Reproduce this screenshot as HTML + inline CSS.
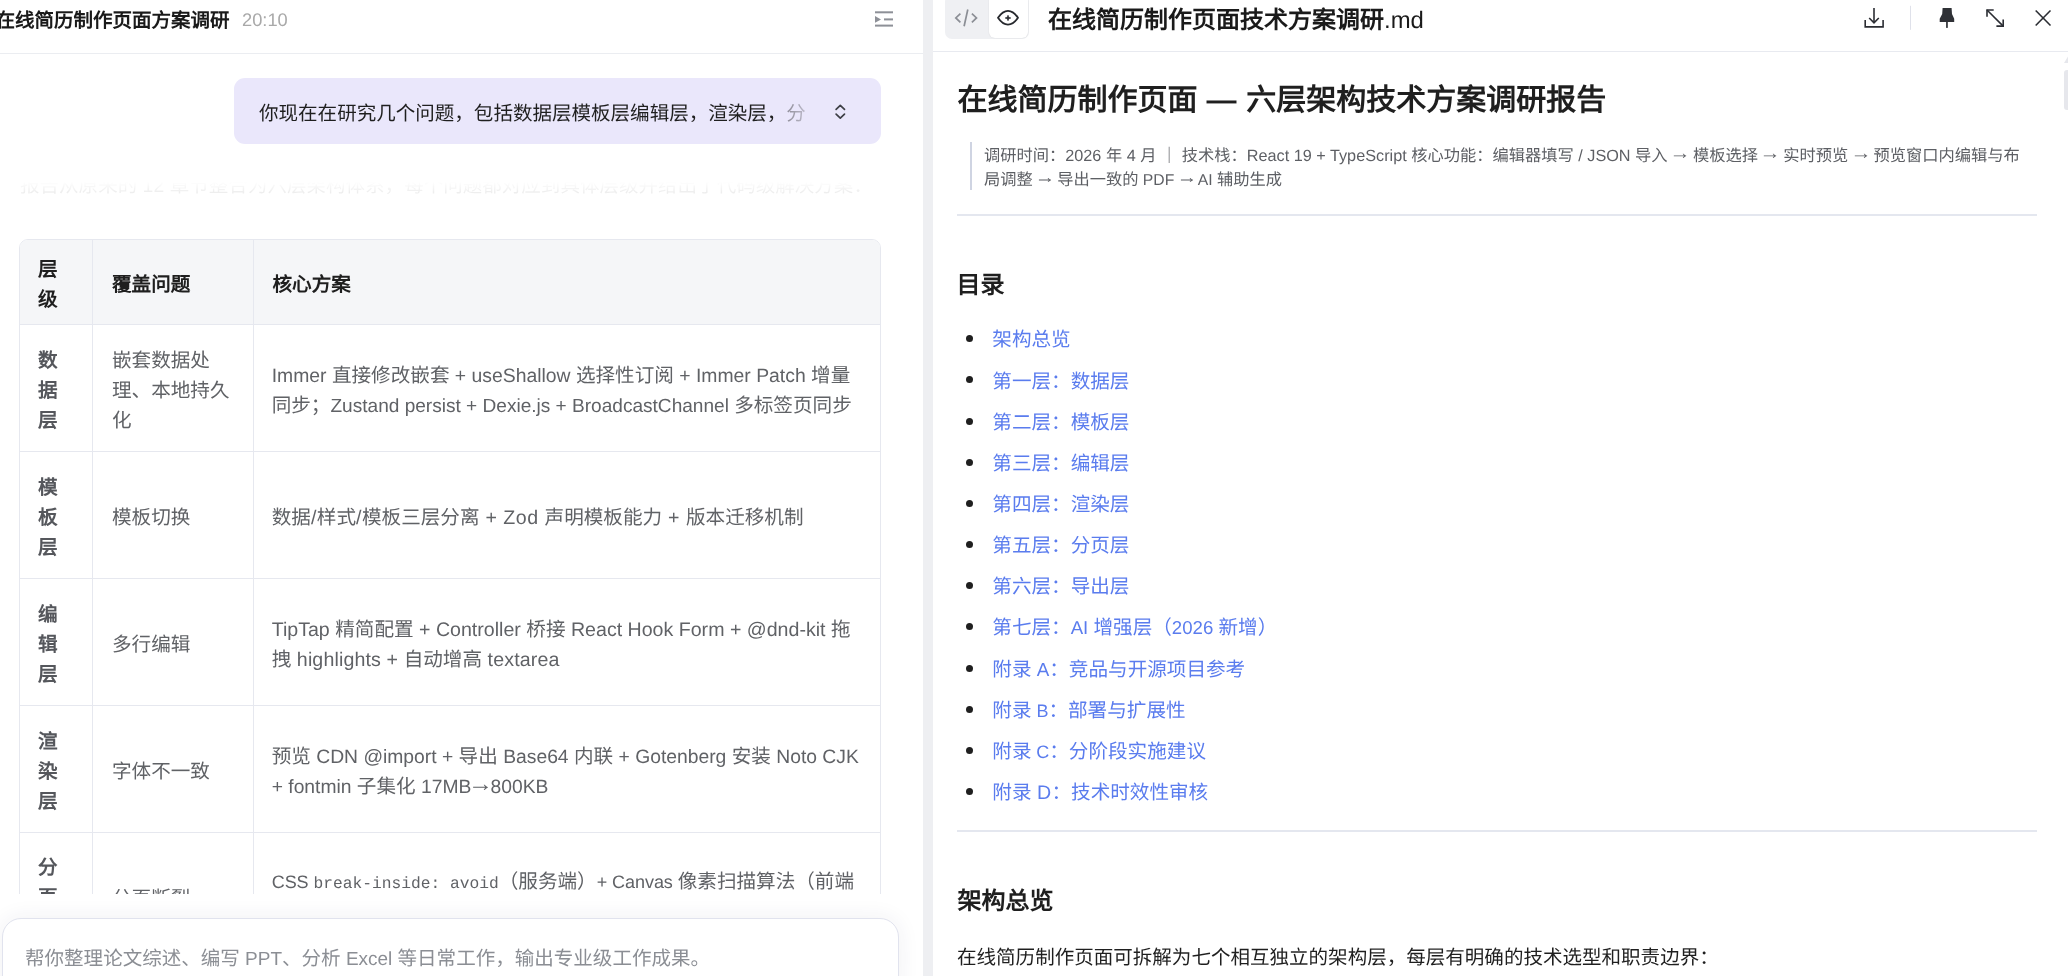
<!DOCTYPE html>
<html lang="zh-CN">
<head>
<meta charset="utf-8">
<title>在线简历制作页面技术方案调研</title>
<style>
*{box-sizing:border-box;margin:0;padding:0}
html,body{width:2068px;height:976px;overflow:hidden;background:#fff}
body{font-family:"Liberation Sans",sans-serif;font-size:19.55px;color:#1f1f1f;position:relative;text-rendering:geometricPrecision}
#page{position:absolute;left:0;top:0;width:2068px;height:976px;opacity:.999}
.abs{position:absolute}
.t{position:absolute;white-space:nowrap;line-height:30px;height:30px}
.nb{font-weight:normal}
#left{position:absolute;left:0;top:0;width:923px;height:976px;background:#fff;overflow:hidden}
#lhead{position:absolute;left:0;top:0;width:923px;height:54px;border-bottom:1px solid #ebedf1;background:#fff}
#bubble{position:absolute;left:234px;top:78px;width:647px;height:66px;border-radius:11px;background:#eae7fb}
#bfade{position:absolute;left:548px;top:14px;width:26px;height:40px;background:linear-gradient(90deg,rgba(234,231,251,.5),rgba(234,231,251,.8))}
#ghost{left:20px;top:171px;color:#000;opacity:.075;height:23px;overflow:hidden;-webkit-mask-image:linear-gradient(transparent 45%,#000 100%);mask-image:linear-gradient(transparent 45%,#000 100%)}
#tblwrap{position:absolute;left:19px;top:239px;width:862px;height:655px;overflow:hidden}
#tbl{position:absolute;left:0;top:0;width:862px;height:760px;border:1px solid #e6e8ef;border-radius:9px;overflow:hidden;background:#fff}
#thead{position:absolute;left:0;top:0;width:862px;height:85px;background:#f5f6f8;border-bottom:1px solid #e6e8ef}
.vline{position:absolute;top:0;width:1px;height:760px;background:#e6e8ef}
.hline{position:absolute;left:0;width:862px;height:1px;background:#e6e8ef}
.th,.c1,.c2,.c3{font-size:19.6px}
.th{font-weight:bold;color:#1f1f1f}
.c1{font-weight:bold;color:#55575c}
.c2,.c3{color:#606266}
.mono{font-family:"Liberation Mono",monospace;font-size:16.25px}
#lfade{position:absolute;left:0;top:894px;width:923px;height:82px;background:#fff}
#input{position:absolute;left:2px;top:918px;width:897px;height:80px;border:1px solid #e1e3ee;border-radius:19px;background:#fff;box-shadow:0 0 22px rgba(40,44,80,.07)}
#divider{position:absolute;left:923px;top:0;width:10px;height:976px;background:#eeeff2}
#right{position:absolute;left:933px;top:0;width:1135px;height:976px;background:#fff;overflow:hidden}
#rhead{position:absolute;left:0;top:0;width:1135px;height:52px;border-bottom:1px solid #e8eaf0;background:#fff}
#tabs{position:absolute;left:12px;top:-5px;width:84px;height:44px;border-radius:7px;background:#eff0f3}
#tabsel{position:absolute;left:44px;top:0;width:39.2px;height:43.3px;border-radius:6px;background:#fff;box-shadow:0 0 1.5px rgba(0,0,0,.12)}
#ricons{position:absolute;left:0;top:0}
#bq{position:absolute;left:37px;top:142px;width:2px;height:48px;background:#cfd4e2}
.bqt{font-size:16.25px;color:#5d5f64;line-height:24px;height:24px}
.hr{position:absolute;left:24px;width:1080px;height:2px;background:#e4e7ef}
.h2{font-size:24px;font-weight:bold;color:#1f1f1f}
.li{color:#5a7cee;font-size:19.6px}
.dot{position:absolute;left:33px;width:7px;height:7px;border-radius:50%;background:#1f1f1f}
#scroll{position:absolute;left:1131px;top:70px;width:6px;height:40px;border-radius:3px;background:#e6e7ec}
.ar{display:inline-block;transform:translateY(-.15em) scale(1.3,1.15)}
</style>
</head>
<body>
<div id="page">
<div id="left">
<div id="lhead">
<div class="t" style="left:-4.6px;top:6px;font-size:19.5px;font-weight:bold;color:#1a1a1a">在线简历制作页面方案调研</div>
<div class="t" style="left:242px;top:5px;font-size:18.5px;color:#a9a9a9"><span class="l" style="font-size:98.9%;letter-spacing:0.01px">20:10</span></div>
<svg class="abs" style="left:874px;top:10px" width="20" height="18" viewBox="0 0 20 18"><g fill="#8d9097"><rect x="1" y="1.3" width="18" height="2"/><rect x="10" y="8.4" width="9" height="2"/><rect x="1" y="14.6" width="18" height="2"/><path d="M1 6 L7 9.4 L1 12.8 Z"/></g></svg>
</div>
<div id="bubble">
<div class="t" style="left:25px;top:20.8px;color:#1f1f1f">你现在在研究几个问题，包括数据层模板层编辑层，渲染层，分</div>
<div id="bfade"></div>
<svg class="abs" style="left:599px;top:25px" width="16" height="18" viewBox="0 0 16 18"><g fill="none" stroke="#3d3f45" stroke-width="1.7" stroke-linecap="round" stroke-linejoin="round"><path d="M3.1 6.3 L7.3 2.3 L11.5 6.3"/><path d="M3.1 11.2 L7.3 15.2 L11.5 11.2"/></g></svg>
</div>
<div class="t" id="ghost">报告从原来的 12 章节整合为六层架构体系，每个问题都对应到具体层级并给出了代码级解决方案：</div>
<div id="tblwrap"><div id="tbl">
<div id="thead"></div>
<div class="vline" style="left:72px"></div>
<div class="vline" style="left:233px"></div>
<div class="hline" style="top:211px"></div>
<div class="hline" style="top:338px"></div>
<div class="hline" style="top:465px"></div>
<div class="hline" style="top:592px"></div>
<div class="t th" style="left:18px;top:14.7px">层</div>
<div class="t th" style="left:18px;top:44.7px">级</div>
<div class="t th" style="left:92px;top:30.2px">覆盖问题</div>
<div class="t th" style="left:252.5px;top:30.2px">核心方案</div>
<div class="t c1" style="left:18px;top:105.7px">数</div>
<div class="t c1" style="left:18px;top:135.7px">据</div>
<div class="t c1" style="left:18px;top:165.7px">层</div>
<div class="t c2" style="left:92px;top:105.7px">嵌套数据处</div>
<div class="t c2" style="left:92px;top:135.7px">理、本地持久</div>
<div class="t c2" style="left:92px;top:165.7px">化</div>
<div class="t c3" style="left:251.7px;top:121.2px"><span class="l" style="font-size:98.8%;letter-spacing:-0.00px">Immer </span>直接修改嵌套<span class="l" style="font-size:98.8%;letter-spacing:-0.00px"> + useShallow </span>选择性订阅<span class="l" style="font-size:98.8%;letter-spacing:-0.00px"> + Immer Patch </span>增量</div>
<div class="t c3" style="left:251.7px;top:151.2px">同步；<span class="l" style="font-size:97.3%;letter-spacing:0.00px">Zustand persist + Dexie.js + BroadcastChannel </span>多标签页同步</div>
<div class="t c1" style="left:18px;top:232.7px">模</div>
<div class="t c1" style="left:18px;top:262.7px">板</div>
<div class="t c1" style="left:18px;top:292.7px">层</div>
<div class="t c2" style="left:92px;top:262.7px">模板切换</div>
<div class="t c3" style="left:251.7px;top:262.7px">数据<span class="l" style="letter-spacing:0.50px">/</span>样式<span class="l" style="letter-spacing:0.50px">/</span>模板三层分离<span class="l" style="letter-spacing:0.50px"> + Zod </span>声明模板能力<span class="l" style="letter-spacing:0.50px"> + </span>版本迁移机制</div>
<div class="t c1" style="left:18px;top:359.7px">编</div>
<div class="t c1" style="left:18px;top:389.7px">辑</div>
<div class="t c1" style="left:18px;top:419.7px">层</div>
<div class="t c2" style="left:92px;top:389.7px">多行编辑</div>
<div class="t c3" style="left:251.7px;top:374.7px"><span class="l" style="letter-spacing:-0.00px">TipTap </span>精简配置<span class="l" style="letter-spacing:-0.00px"> + Controller </span>桥接<span class="l" style="letter-spacing:-0.00px"> React Hook Form + @dnd-kit </span>拖</div>
<div class="t c3" style="left:251.7px;top:404.7px">拽<span class="l" style="letter-spacing:0.13px"> highlights + </span>自动增高<span class="l" style="letter-spacing:0.13px"> textarea</span></div>
<div class="t c1" style="left:18px;top:486.7px">渲</div>
<div class="t c1" style="left:18px;top:516.7px">染</div>
<div class="t c1" style="left:18px;top:546.7px">层</div>
<div class="t c2" style="left:92px;top:516.7px">字体不一致</div>
<div class="t c3" style="left:251.7px;top:501.7px">预览<span class="l" style="font-size:98.5%;letter-spacing:0.00px"> CDN @import + </span>导出<span class="l" style="font-size:98.5%;letter-spacing:0.00px"> Base64 </span>内联<span class="l" style="font-size:98.5%;letter-spacing:0.00px"> + Gotenberg </span>安装<span class="l" style="font-size:98.5%;letter-spacing:0.00px"> Noto CJK</span></div>
<div class="t c3" style="left:251.7px;top:531.7px"><span class="l" style="font-size:98.4%;letter-spacing:0.00px">+ fontmin </span>子集化<span class="l" style="font-size:98.4%;letter-spacing:0.00px"> 17MB<span class="ar">→</span>800KB</span></div>
<div class="t c1" style="left:18px;top:613.3px">分</div>
<div class="t c1" style="left:18px;top:643.3px">页</div>
<div class="t c1" style="left:18px;top:673.3px">层</div>
<div class="t c2" style="left:92px;top:644.2px">分页断裂</div>
<div class="t c3" style="left:251.7px;top:626.9px"><span class="l" style="font-size:92.0%;letter-spacing:-0.07px">CSS </span><span class="mono">break-inside: avoid</span>（服务端）<span class="l" style="font-size:92.0%;letter-spacing:-0.07px">+ Canvas </span>像素扫描算法（前端</div>
<div class="t c3" style="left:251.7px;top:659.2px">兜底）<span>+ </span>孤行寡行控制</div>
</div></div>
<div id="lfade"></div>
<div id="input">
<div class="t" style="left:22px;top:24.8px;color:#8b8e94">帮你整理论文综述、编写<span class="l" style="font-size:97.1%;letter-spacing:-0.00px"> PPT</span>、分析<span class="l" style="font-size:97.1%;letter-spacing:-0.00px"> Excel </span>等日常工作，输出专业级工作成果。</div>
</div>
</div>

<div id="divider"></div>
<div id="right">
<div id="rhead">
<div id="tabs"><div id="tabsel"></div></div>
<div class="t" style="left:115.0px;top:6px;font-size:24px;font-weight:bold;color:#1a1a1a">在线简历制作页面技术方案调研<span class="nb l" style="font-size:99.5%;letter-spacing:-0.00px">.md</span></div>
<svg id="ricons" width="1135" height="52" viewBox="933 0 1135 52">
<g fill="none" stroke="#8b8e95" stroke-width="1.7"><path d="M960.4 13.6 L955.8 17.95 L960.4 22.3"/><path d="M967.8 9.5 L964.1 26.3"/><path d="M971.9 13.6 L976.5 17.95 L971.9 22.3"/></g>
<path d="M998 17.8 C1001.5 12.6 1005 10.9 1008 10.9 C1011 10.9 1014.5 12.6 1018 17.8 C1014.5 23 1011 24.7 1008 24.7 C1005 24.7 1001.5 23 998 17.8 Z" fill="none" stroke="#26282d" stroke-width="1.8" stroke-linejoin="round"/>
<path d="M1008 15.2 L1008.8 17.2 L1010.9 18 L1008.8 18.8 L1008 20.8 L1007.2 18.8 L1005.1 18 L1007.2 17.2 Z" fill="#26282d" stroke="#26282d" stroke-width=".6" stroke-linejoin="round"/>
<g fill="none" stroke="#2b2d33" stroke-width="1.6"><path d="M1865.2 20.1 V26.9 H1883.1 V20.1"/><path d="M1874 8 V22.6"/><path d="M1869.2 18 L1874 22.8 L1878.8 18"/></g>
<rect x="1910" y="5.8" width="1" height="24" fill="#dfe1ea"/>
<path d="M1942.6 8 H1951.6 L1952 14 L1954.2 18.8 V22 H1939.7 V18.8 L1942.2 14 Z" fill="#2f3136"/><rect x="1946.1" y="21.5" width="1.7" height="6.4" fill="#2f3136"/>
<g fill="none" stroke="#2b2d33" stroke-width="1.6"><path d="M1987 10 L2003.2 26.1"/><path d="M1993.7 10 H1987 V16.8"/><path d="M1996.4 26.1 H2003.2 V19.4"/></g>
<g fill="none" stroke="#2b2d33" stroke-width="1.6"><path d="M2035.7 10.5 L2050.5 25.5"/><path d="M2050.5 10.5 L2035.7 25.5"/></g>
</svg>
</div>
<div id="bq"></div>
<div class="hr" style="top:214px"></div>
<div class="hr" style="top:830px"></div>
<div class="dot" style="top:335.2px"></div>
<div class="dot" style="top:376.4px"></div>
<div class="dot" style="top:417.5px"></div>
<div class="dot" style="top:458.7px"></div>
<div class="dot" style="top:499.8px"></div>
<div class="dot" style="top:541.0px"></div>
<div class="dot" style="top:582.2px"></div>
<div class="dot" style="top:623.3px"></div>
<div class="dot" style="top:664.5px"></div>
<div class="dot" style="top:705.6px"></div>
<div class="dot" style="top:746.8px"></div>
<div class="dot" style="top:788.0px"></div>
<div class="t" style="left:24.5px;top:86px;font-size:30px;font-weight:bold;color:#1f1f1f">在线简历制作页面<span class="l" style="letter-spacing:0.70px"> — </span>六层架构技术方案调研报告</div>
<div class="t bqt" style="left:51px;top:144px">调研时间：<span class="l" style="font-size:99.9%;letter-spacing:0.01px">2026 </span>年<span class="l" style="font-size:99.9%;letter-spacing:0.01px"> 4 </span>月<span class="l" style="font-size:99.9%;letter-spacing:0.01px"> </span>｜<span class="l" style="font-size:99.9%;letter-spacing:0.01px"> </span>技术栈：<span class="l" style="font-size:99.9%;letter-spacing:0.01px">React 19 + TypeScript </span>核心功能：编辑器填写<span class="l" style="font-size:99.9%;letter-spacing:0.01px"> / JSON </span>导入<span class="l" style="font-size:99.9%;letter-spacing:0.01px"> <span class="ar">→</span> </span>模板选择<span class="l" style="font-size:99.9%;letter-spacing:0.01px"> <span class="ar">→</span> </span>实时预览<span class="l" style="font-size:99.9%;letter-spacing:0.01px"> <span class="ar">→</span> </span>预览窗口内编辑与布</div>
<div class="t bqt" style="left:51px;top:168px">局调整<span class="l" style="font-size:96.8%;letter-spacing:0.00px"> <span class="ar">→</span> </span>导出一致的<span class="l" style="font-size:96.8%;letter-spacing:0.00px"> PDF <span class="ar">→</span> AI </span>辅助生成</div>
<div class="t h2" style="left:23.5px;top:271.0px">目录</div>
<div class="t li" style="left:59.3px;top:325.3px">架构总览</div>
<div class="t li" style="left:59.3px;top:366.5px">第一层：数据层</div>
<div class="t li" style="left:59.3px;top:407.6px">第二层：模板层</div>
<div class="t li" style="left:59.3px;top:448.8px">第三层：编辑层</div>
<div class="t li" style="left:59.3px;top:489.9px">第四层：渲染层</div>
<div class="t li" style="left:59.3px;top:531.1px">第五层：分页层</div>
<div class="t li" style="left:59.3px;top:572.3px">第六层：导出层</div>
<div class="t li" style="left:59.3px;top:613.4px">第七层：<span class="l" style="font-size:95.1%;letter-spacing:0.01px">AI </span>增强层（<span class="l" style="font-size:95.1%;letter-spacing:0.01px">2026 </span>新增）</div>
<div class="t li" style="left:59.3px;top:654.6px">附录<span class="l" style="font-size:96.0%;letter-spacing:0.01px"> A</span>：竞品与开源项目参考</div>
<div class="t li" style="left:59.3px;top:695.7px">附录<span class="l" style="font-size:92.0%;letter-spacing:-0.04px"> B</span>：部署与扩展性</div>
<div class="t li" style="left:59.3px;top:736.9px">附录<span class="l" style="font-size:92.0%;letter-spacing:-0.13px"> C</span>：分阶段实施建议</div>
<div class="t li" style="left:59.3px;top:778.1px">附录<span class="l" style="letter-spacing:0.18px"> D</span>：技术时效性审核</div>
<div class="t h2" style="left:24.5px;top:886.6px">架构总览</div>
<div class="t" style="left:24px;top:943px;color:#1f1f1f">在线简历制作页面可拆解为七个相互独立的架构层，每层有明确的技术选型和职责边界：</div>
<div id="scroll"></div>
<svg class="abs" style="left:1130px;top:56px" width="5" height="8" viewBox="0 0 5 8"><path d="M1 7 L5 0.5 V7 Z" fill="#e6e7ec"/></svg>
</div>

</div>
</body>
</html>
